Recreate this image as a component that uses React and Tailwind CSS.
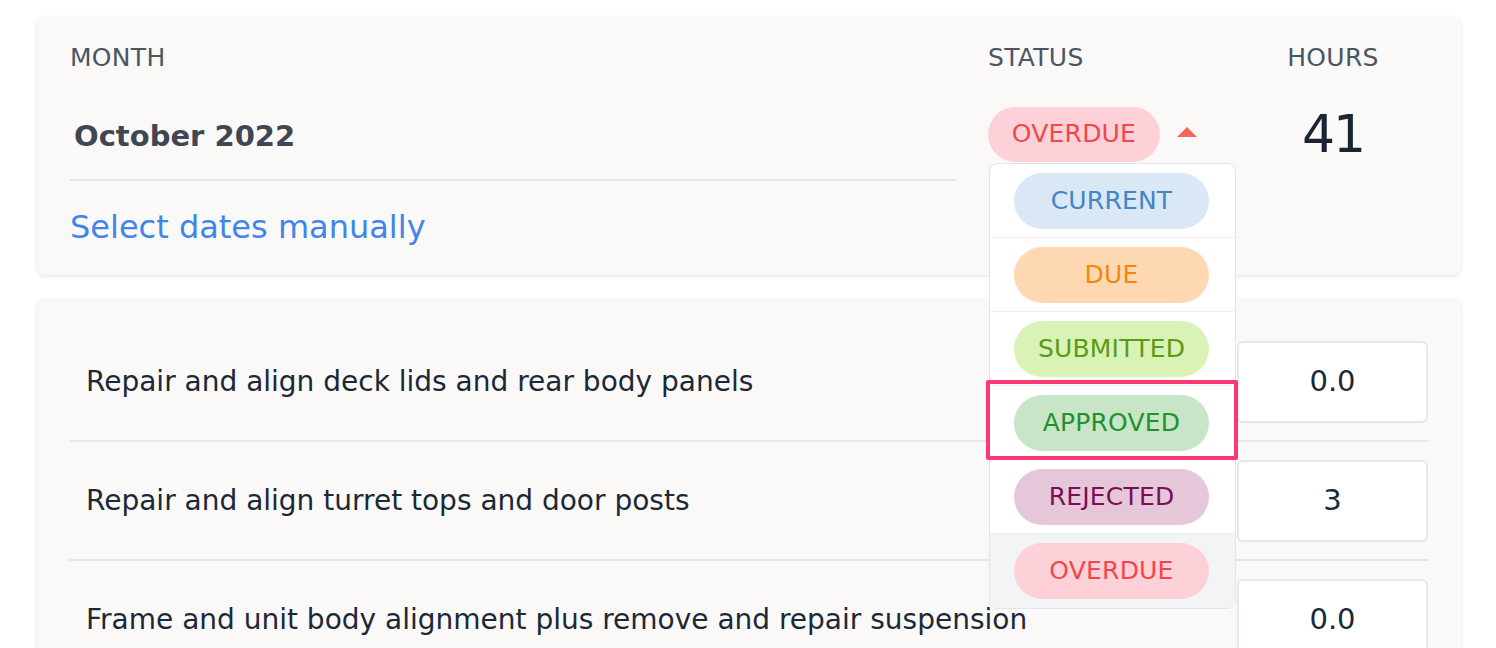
import React from "react";

const items = [
  { label: "CURRENT", bg: "bg-[#dae8f5]", fg: "text-[#3f85c8]" },
  { label: "DUE", bg: "bg-[#fed8b0]", fg: "text-[#f5870f]" },
  { label: "SUBMITTED", bg: "bg-[#d9f2b6]", fg: "text-[#5c9a13]" },
  { label: "APPROVED", bg: "bg-[#c9e5c8]", fg: "text-[#23912b]" },
  { label: "REJECTED", bg: "bg-[#e6c7da]", fg: "text-[#7a0e55]" },
  { label: "OVERDUE", bg: "bg-[#fed1d9]", fg: "text-[#f2474a]" },
];

const rows = [
  { text: "Repair and align deck lids and rear body panels", val: "0.0" },
  { text: "Repair and align turret tops and door posts", val: "3" },
  { text: "Frame and unit body alignment plus remove and repair suspension", val: "0.0" },
];

export default function App() {
  return (
    <div
      className="w-[1496px] h-[648px] overflow-hidden bg-white text-[#1b2838]"
      style={{ fontFamily: '"DejaVu Sans", sans-serif' }}
    >
      <div className="pt-[17px] pl-[37px] pr-[35px]">
        {/* Card 1 */}
        <div className="relative z-10 bg-[#faf9f7] rounded-[8px] shadow-[0_1px_4px_rgba(0,0,0,0.12)] pl-[33px] pr-[33px] pt-[25px] pb-[28px] flex">
          <div className="flex-1 flex flex-col">
            <div className="h-[32px] leading-[32px] text-[25px] tracking-[0.3px] text-[#4b5563]">MONTH</div>
            <div className="h-[68px] mt-[26px] flex items-center pl-[4px] pt-[6px] text-[29px] font-bold text-[#3f4654]">
              October 2022
            </div>
            <div className="mt-[11px] border-t-2 border-[#e5e6e8]"></div>
            <div className="mt-[26px] h-[40px] leading-[40px] text-[32px] text-[#3f86ea]">Select dates manually</div>
          </div>
          <div className="w-[247px] ml-[32px] flex flex-col">
            <div className="h-[32px] leading-[32px] text-[25px] tracking-[0.3px] text-[#4b5563]">STATUS</div>
            <div className="relative h-[68px] mt-[26px] flex items-center">
              <div className="h-[55px] w-[172px] rounded-full bg-[#fed1d9] text-[#f2474a] text-[25px] tracking-[0.2px] flex items-center justify-center">
                OVERDUE
              </div>
              <svg width="20" height="10" viewBox="0 0 20 10" className="ml-[17px] -mt-[4px]">
                <path d="M10 0 L20 10 L0 10 Z" fill="#f26a55" />
              </svg>
              {/* Dropdown */}
              <div className="absolute left-[1px] top-[63px] w-[247px] bg-white border border-[#e3e5e8] rounded-[8px] overflow-visible">
                {items.map((it, i) => (
                  <div
                    key={it.label}
                    className={
                      "h-[74px] flex items-center pl-[24px] " +
                      (i < items.length - 1 ? "border-b border-[#eef0f2] " : "") +
                      (i === items.length - 1 ? "bg-[#f3f4f6] rounded-b-[8px]" : "")
                    }
                  >
                    <div
                      className={
                        "h-[56px] w-[195px] rounded-full flex items-center justify-center text-[25px] tracking-[0.2px] " +
                        it.bg +
                        " " +
                        it.fg
                      }
                    >
                      {it.label}
                    </div>
                  </div>
                ))}
                <div className="absolute left-[-4px] top-[216px] w-[252px] h-[80px] border-[4px] border-[#fb3873] rounded-[2px]"></div>
              </div>
            </div>
          </div>
          <div className="w-[190px] ml-[3px] flex flex-col items-center">
            <div className="h-[32px] leading-[32px] text-[25px] tracking-[0.3px] text-[#4b5563]">HOURS</div>
            <div className="h-[68px] mt-[26px] flex items-center text-[52px] tracking-[-2px] text-[#1b2433]">41</div>
          </div>
        </div>

        {/* Card 2 */}
        <div className="mt-[24px] bg-[#faf9f7] rounded-[8px] shadow-[0_1px_4px_rgba(0,0,0,0.12)] pl-[32px] pr-[33px] pt-[24px] pb-[20px]">
          {rows.map((r, i) => (
            <div
              key={i}
              className={"flex items-center pt-[18px] pb-[17px] " + (i < rows.length - 1 ? "border-b-2 border-[#e6e7ea]" : "")}
            >
              <div className="flex-1 pl-[17px] text-[28px]">{r.text}</div>
              <div className="w-[191px] h-[82px] bg-white border-2 border-[#e6e7ea] rounded-[6px] flex items-center justify-center text-[29px]">
                {r.val}
              </div>
            </div>
          ))}
        </div>
      </div>
    </div>
  );
}
